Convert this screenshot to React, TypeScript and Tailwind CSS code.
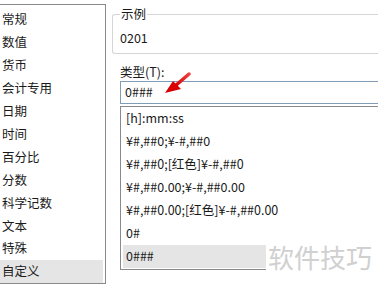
import React from 'react';

const categories = ['常规', '数值', '货币', '会计专用', '日期', '时间', '百分比', '分数', '科学记数', '文本', '特殊', '自定义'];
const formats = ['[h]:mm:ss', '¥#,##0;¥-#,##0', '¥#,##0;[红色]¥-#,##0', '¥#,##0.00;¥-#,##0.00', '¥#,##0.00;[红色]¥-#,##0.00', '0#', '0###'];

const font = { fontFamily: '"Noto Sans CJK SC", "Noto Sans", sans-serif' };

export default function App() {
  const selectedCat = '自定义';
  const selectedFmt = '0###';

  return (
    <div className="relative w-[378px] h-[288px] bg-white overflow-hidden flex text-[12.5px] text-[#1a1a1a]" style={font}>
      {/* Category list */}
      <div className="w-[106px] h-[280px] mt-[4px] shrink-0 border-t border-r border-b border-[#8a8a8a] pt-[3px] flex flex-col">
        {categories.map(c => (
          <div
            key={c}
            className={`h-[23.4px] pl-[2px] mr-[2px] flex items-center leading-none ${c === selectedCat ? 'bg-[#e5e5e5]' : ''}`}
          >
            {c}
          </div>
        ))}
      </div>

      {/* Right side */}
      <div className="flex-1 ml-[6px] flex flex-col min-w-0">
        <fieldset className="mt-[5px] h-[49px] border border-[#d5d5d5] rounded-[3px] border-r-0 rounded-r-none pl-[7px]">
          <legend className="px-[1px] leading-[18px]">示例</legend>
          <div className="mt-[9px] leading-none">0201</div>
        </fieldset>

        <div className="ml-[8px] mt-[12px] leading-none">类型(T):</div>
        <div className="ml-[8px] mt-[2px] h-[23px] border border-[#7f9db9] border-r-0 flex items-center pl-[4px] bg-white">
          0###
        </div>
        <div className="ml-[8px] mt-[2px] h-[164px] border border-[#8a8a8a] border-r-0 pl-[2px] flex flex-col">
          {formats.map(f => (
            <div
              key={f}
              className={`h-[23px] shrink-0 flex items-center pl-[3px] leading-none ${f === selectedFmt ? 'bg-[#e5e5e5]' : ''}`}
            >
              {f}
            </div>
          ))}
        </div>
      </div>

      {/* Red arrow */}
      <svg className="absolute left-[161px] top-[70px]" width="34" height="28" viewBox="0 0 34 28">
        <defs>
          <linearGradient id="ag" x1="0" y1="1" x2="1" y2="0">
            <stop offset="0" stopColor="#d40000" />
            <stop offset="1" stopColor="#f04040" />
          </linearGradient>
        </defs>
        <path d="M28 4 L14 16" stroke="url(#ag)" strokeWidth="3.5" strokeLinecap="round" />
        <path d="M4 23 L12 11 L20 19 Z" fill="#d80000" />
      </svg>

      {/* Watermark */}
      <div className="absolute left-[266px] top-[240px] bg-white pl-[2px] pr-[6px] text-[26px] leading-[34px] text-[#d0d0d0] whitespace-nowrap" style={font}>
        软件技巧
      </div>
    </div>
  );
}
